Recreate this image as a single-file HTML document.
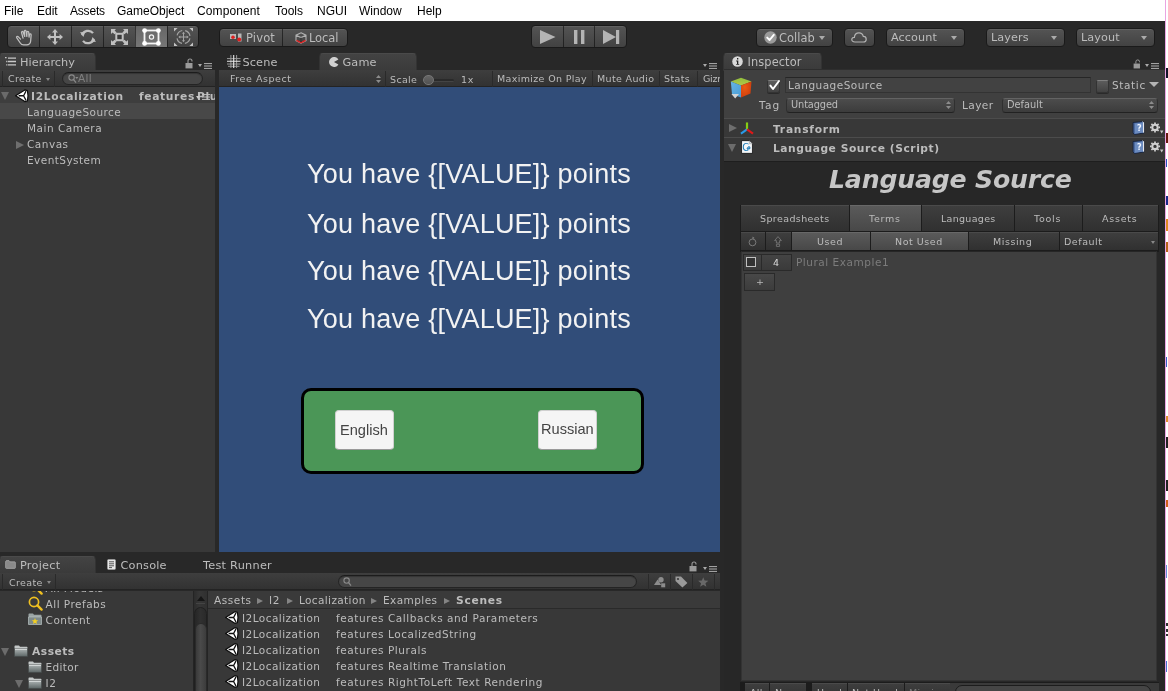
<!DOCTYPE html>
<html>
<head>
<meta charset="utf-8">
<title>Unity - I2 Localization</title>
<style>
html,body{margin:0;padding:0;}
body{width:1168px;height:691px;overflow:hidden;background:#fff;position:relative;font-family:"DejaVu Sans","Liberation Sans",sans-serif;font-size:11px;color:#b4b4b4;}
#app,#app *,#edge,#edge *{position:absolute;box-sizing:border-box;white-space:nowrap;}
#app{will-change:transform;left:0;top:0;width:1165px;height:691px;background:#282828;overflow:hidden;}
#menubar{left:0;top:0;width:1168px;height:21px;background:#fff;color:#000;font-family:"Liberation Sans","DejaVu Sans",sans-serif;font-size:12px;}
#menubar span{top:4px;}
.btn{background:linear-gradient(#545454,#424242);border:1px solid #1a1a1a;border-radius:4px;box-shadow:inset 0 1px 0 rgba(255,255,255,.08);}
.t{color:#bcbcbc;font-size:10.5px;letter-spacing:.45px;line-height:14px;}
.b{font-weight:bold;letter-spacing:.3px;}
.s{font-size:9.5px;letter-spacing:.35px;}
.tab{background:linear-gradient(#434343,#3a3a3a);border:1px solid #333;border-top-color:#4a4a4a;border-bottom:none;border-radius:4px 4px 0 0;}
.tb{background:linear-gradient(#3e3e3e,#323232);border-bottom:1px solid #232323;}
.panel{background:#383838;}
.sep{width:1px;background:rgba(0,0,0,.5);}
.dd{border-left:3px solid transparent;border-right:3px solid transparent;border-top:4px solid #aaa;width:0;height:0;}
svg{overflow:visible}
.bc{border-top:3px solid transparent;border-bottom:3px solid transparent;border-left:6px solid #848484;width:0;height:0;}
.lt{background:linear-gradient(#3e3e3e,#303030);border-top:1px solid #4a4a4a;}
.lt.on{background:linear-gradient(#5a5a5a,#484848);border-top:1px solid #686868;}
</style>
</head>
<body>
<div id="app">
<div id="menubar">
  <span style="left:4px">File</span>
  <span style="left:37px">Edit</span>
  <span style="left:70px;letter-spacing:-.2px">Assets</span>
  <span style="left:117px">GameObject</span>
  <span style="left:197px;letter-spacing:.1px">Component</span>
  <span style="left:275px">Tools</span>
  <span style="left:317px">NGUI</span>
  <span style="left:359px">Window</span>
  <span style="left:417px">Help</span>
</div>

<div id="toolbar" style="left:0;top:21px;width:1165px;height:32px;background:#282828;">
  <!-- transform tools -->
  <div class="btn" style="left:7px;top:4px;width:192px;height:23px;"></div>
  <div style="left:135px;top:5px;width:32px;height:21px;background:linear-gradient(#666,#767676);"></div>
  <div class="sep" style="left:38.5px;top:5px;height:21px"></div>
  <div class="sep" style="left:70.5px;top:5px;height:21px"></div>
  <div class="sep" style="left:102.5px;top:5px;height:21px"></div>
  <div class="sep" style="left:135px;top:5px;height:21px"></div>
  <div class="sep" style="left:166.5px;top:5px;height:21px"></div>
  <!-- hand -->
  <svg style="left:14.5px;top:8px" width="19" height="17" viewBox="0 0 18 16"><path d="M5.2 9.5 L3 7.2 C2.2 6.4 1 7.4 1.7 8.4 L5 13.2 C5.8 14.4 6.8 15 8.2 15 L11 15 C13.2 15 14.6 13.6 14.8 11.6 L15.3 5.6 C15.4 4.5 13.9 4.3 13.7 5.4 L13.3 7.6 L13 3 C12.9 1.8 11.3 1.8 11.3 3 L11.2 7 L10.4 1.9 C10.2 .8 8.7 1 8.8 2.1 L9.2 7 L7.7 2.9 C7.3 1.8 5.9 2.3 6.2 3.4 L7.6 8.6" fill="none" stroke="#c0c0c0" stroke-width="1.2" stroke-linejoin="round" stroke-linecap="round"/></svg>
  <!-- move -->
  <svg style="left:47px;top:8px" width="16" height="16" viewBox="0 0 16 16"><path d="M8 0 L11 3.4 H9 V7 H12.6 V5 L16 8 L12.6 11 V9 H9 V12.6 H11 L8 16 L5 12.6 H7 V9 H3.4 V11 L0 8 L3.4 5 V7 H7 V3.4 H5 Z" fill="#c0c0c0"/></svg>
  <!-- rotate -->
  <svg style="left:80px;top:8px" width="16" height="16" viewBox="0 0 16 16"><path d="M2.2 6.3 A6 5.6 0 0 1 13 4.2" fill="none" stroke="#c0c0c0" stroke-width="2.2"/><path d="M13.8 9.7 A6 5.6 0 0 1 3 11.8" fill="none" stroke="#c0c0c0" stroke-width="2.2"/><path d="M0 3.2 L5.2 3 L3.4 8 Z" fill="#c0c0c0"/><path d="M16 12.8 L10.8 13 L12.6 8 Z" fill="#c0c0c0"/></svg>
  <!-- scale -->
  <svg style="left:111px;top:8px" width="17" height="16" viewBox="0 0 17 16"><rect x="5.3" y="4.8" width="6.4" height="6.4" fill="#3a3a3a" stroke="#c0c0c0" stroke-width="2"/><g fill="#c0c0c0"><path d="M0 0 H5 L3.6 1.4 L5.6 3.4 L3.6 5.2 L1.6 3.4 L0 5 Z"/><path d="M17 0 H12 L13.4 1.4 L11.4 3.4 L13.4 5.2 L15.4 3.4 L17 5 Z"/><path d="M0 16 H5 L3.6 14.6 L5.6 12.6 L3.6 10.8 L1.6 12.6 L0 11 Z"/><path d="M17 16 H12 L13.4 14.6 L11.4 12.6 L13.4 10.8 L15.4 12.6 L17 11 Z"/></g></svg>
  <!-- rect -->
  <svg style="left:142px;top:7px" width="19" height="18" viewBox="0 0 19 18"><rect x="2.5" y="2.5" width="14" height="13" fill="none" stroke="#f4f4f4" stroke-width="1.8"/><g fill="#fff"><circle cx="2.6" cy="2.6" r="2.4"/><circle cx="16.4" cy="2.6" r="2.4"/><circle cx="2.6" cy="15.4" r="2.4"/><circle cx="16.4" cy="15.4" r="2.4"/></g><circle cx="9.5" cy="9" r="2.1" fill="none" stroke="#f4f4f4" stroke-width="1.2"/></svg>
  <!-- transform all -->
  <svg style="left:174px;top:7px" width="19" height="18" viewBox="0 0 19 18"><circle cx="9.5" cy="9" r="6.6" fill="none" stroke="#a4a4a4" stroke-width="1.2" stroke-dasharray="7.4 2.97" stroke-dashoffset="-1.48"/><path d="M9.5 5 V13 M5.5 9 H13.5" stroke="#a4a4a4" stroke-width="1"/><path d="M9.5 3.8 L11 5.8 H8 Z M9.5 14.2 L11 12.2 H8 Z M4.3 9 L6.3 7.5 V10.5 Z M14.7 9 L12.7 7.5 V10.5 Z" fill="#a4a4a4"/><g fill="#c4c4c4"><path d="M0 0 H3.6 L0 3.6 Z" /><path d="M19 0 H15.4 L19 3.6 Z"/><path d="M0 18 H3.6 L0 14.4 Z"/><path d="M19 18 H15.4 L19 14.4 Z"/></g></svg>

  <!-- pivot / local -->
  <div class="btn" style="left:218.5px;top:7px;width:129px;height:19px;"></div>
  <div class="sep" style="left:282px;top:8px;height:17px"></div>
  <svg style="left:230px;top:12px" width="12" height="9" viewBox="0 0 12 9"><rect x="0" y="1" width="6" height="5" fill="#b8b8b8"/><rect x="8" y="0.5" width="3.5" height="8" fill="#b8b8b8"/><circle cx="3" cy="4.2" r="1.8" fill="#e02020"/><circle cx="9.2" cy="6.6" r="2" fill="#e02020"/></svg>
  <span class="t" style="left:246px;top:10px;font-size:11.5px;letter-spacing:.15px">Pivot</span>
  <svg style="left:295px;top:11px" width="12" height="12" viewBox="0 0 12 12"><path d="M6 .8 L11 3.2 V8.6 L6 11.2 L1 8.6 V3.2 Z M1 3.2 L6 5.6 L11 3.2 M6 5.6 V11.2" fill="none" stroke="#b0b0b0" stroke-width="1.1"/><path d="M1.4 8.4 L6 10.6 L10.6 8.4" fill="none" stroke="#d82020" stroke-width="1.6"/><path d="M6 5.8 V10" stroke="#222" stroke-width="1.4"/></svg>
  <span class="t" style="left:309px;top:10px;font-size:11.5px;letter-spacing:-.1px">Local</span>

  <!-- play -->
  <div class="btn" style="left:531px;top:4px;width:96px;height:23px;"></div>
  <div class="sep" style="left:563px;top:5px;height:21px"></div>
  <div class="sep" style="left:594px;top:5px;height:21px"></div>
  <svg style="left:540px;top:9px" width="16" height="14" viewBox="0 0 16 14"><path d="M0 0 L15.5 7 L0 14 Z" fill="#b4b4b4"/></svg>
  <svg style="left:574px;top:9px" width="11" height="14" viewBox="0 0 11 14"><rect x="0" y="0" width="3.4" height="14" fill="#b4b4b4"/><rect x="7" y="0" width="3.4" height="14" fill="#b4b4b4"/></svg>
  <svg style="left:603px;top:9px" width="17" height="14" viewBox="0 0 17 14"><path d="M0 0 L13 7 L0 14 Z" fill="#b4b4b4"/><rect x="13" y="0" width="3.2" height="14" fill="#b4b4b4"/></svg>

  <!-- collab -->
  <div class="btn" style="left:755.5px;top:7px;width:77px;height:19px;"></div>
  <svg style="left:764px;top:10px" width="13" height="13" viewBox="0 0 13 13"><circle cx="6.5" cy="6.5" r="6.2" fill="#9a9a9a"/><path d="M3.2 6.6 L5.6 9 L9.8 3.8" fill="none" stroke="#fff" stroke-width="1.9" stroke-linecap="round" stroke-linejoin="round"/></svg>
  <span class="t" style="left:779px;top:10px;font-size:11.4px;letter-spacing:.05px">Collab</span>
  <div class="dd" style="left:819px;top:15px"></div>
  <!-- cloud -->
  <div class="btn" style="left:843.5px;top:7px;width:31px;height:19px;"></div>
  <svg style="left:851px;top:11px" width="16" height="11" viewBox="0 0 16 11"><path d="M4 10 C1.6 10 .7 8.6 .8 7.4 C.9 6 2.2 5.2 3.4 5.3 C3.6 2.6 5.6 .8 8 .8 C10.2 .8 11.8 2.2 12.3 4.4 C14 4.4 15.2 5.6 15.2 7.2 C15.2 8.8 14 10 12.4 10 Z" fill="none" stroke="#b4b4b4" stroke-width="1.2"/></svg>
  <!-- account -->
  <div class="btn" style="left:885.5px;top:7px;width:79px;height:19px;"></div>
  <span class="t" style="left:891px;top:10px;font-size:11.2px;letter-spacing:.1px">Account</span>
  <div class="dd" style="left:951px;top:15px"></div>
  <div class="btn" style="left:985.5px;top:7px;width:79px;height:19px;"></div>
  <span class="t" style="left:991px;top:10px;font-size:11.2px;letter-spacing:.1px">Layers</span>
  <div class="dd" style="left:1051px;top:15px"></div>
  <div class="btn" style="left:1075.5px;top:7px;width:79px;height:19px;"></div>
  <span class="t" style="left:1081px;top:10px;font-size:11.2px;letter-spacing:.1px">Layout</span>
  <div class="dd" style="left:1141px;top:15px"></div>
</div>

<div id="hier" style="left:0;top:53px;width:215.4px;height:499px;overflow:hidden">
  <div class="tab" style="left:-1px;top:0;width:97px;height:18px;"></div>
  <svg style="left:5px;top:4px" width="11" height="9" viewBox="0 0 11 9"><path d="M0 .7 H1.6 M3 1.2 H11 M3 4.5 H11 M3 7.8 H11 M1.2 4.5 H2.4 M1.2 7.8 H2.4" stroke="#c8c8c8" stroke-width="1.3"/></svg>
  <span class="t" style="left:20px;top:2.5px;font-size:11.3px;letter-spacing:.05px">Hierarchy</span>
  <!-- lock + menu -->
  <svg style="left:185px;top:5px" width="9" height="11" viewBox="0 0 9 11"><rect x=".5" y="5" width="7" height="5.4" fill="#9a9a9a"/><path d="M3 5 V3 A2 2 0 0 1 7 3 V3.6" fill="none" stroke="#9a9a9a" stroke-width="1.1"/></svg>
  <div class="dd" style="left:198px;top:11px;border-left-width:2.5px;border-right-width:2.5px;border-top-width:3px"></div>
  <svg style="left:204px;top:10px" width="8" height="6" viewBox="0 0 8 6"><path d="M0 .6 H8 M0 3 H8 M0 5.4 H8" stroke="#b0b0b0" stroke-width="1"/></svg>
  <!-- toolbar -->
  <div class="tb" style="left:0;top:16.6px;width:216px;height:17.6px;"></div>
  <div style="left:2px;top:18px;width:1px;height:16px;background:#2a2a2a"></div>
  <span class="t s" style="left:8px;top:19px;">Create</span>
  <div class="dd" style="left:46px;top:25px;border-left-width:2.5px;border-right-width:2.5px;border-top-width:3px;border-top-color:#888"></div>
  <div style="left:54px;top:18px;width:1px;height:16px;background:#2a2a2a"></div>
  <div style="left:62px;top:19px;width:141px;height:13px;border-radius:7px;background:#464646;border:1px solid #242424;border-top-color:#1c1c1c;box-shadow:inset 0 1px 1px rgba(0,0,0,.25)"></div>
  <svg style="left:68px;top:21px" width="12" height="10" viewBox="0 0 12 10"><circle cx="3.6" cy="3.6" r="2.7" fill="none" stroke="#8a8a8a" stroke-width="1.1"/><path d="M5.6 5.6 L8 8.6" stroke="#8a8a8a" stroke-width="1.3"/><path d="M7.2 3 H10.4 L8.8 5 Z" fill="#8a8a8a"/></svg>
  <span class="t s" style="left:78px;top:18px;color:#808080;font-size:10.5px">All</span>
  <!-- list -->
  <div class="panel" style="left:0;top:34px;width:216px;height:465px;"></div>
  <div style="left:0;top:34px;width:216px;height:16px;background:#3e3e3e"></div>
  <div style="left:0;top:50px;width:216px;height:16px;background:#484848"></div>
  <div style="left:1px;top:39px;border-left:4.5px solid transparent;border-right:4.5px solid transparent;border-top:8px solid #6a6a6a;width:0;height:0"></div>
  <!-- unity logo -->
  <svg style="left:14.5px;top:35.5px" width="13.5" height="13.5" viewBox="0 0 13.5 13"><path d="M.6 6.5 L9.8 .7 L12.4 1.3 L13 6.5 L12.4 11.7 L9.8 12.3 Z" fill="#fff" stroke="#0c0c0c" stroke-width="1.2" stroke-linejoin="round"/><path d="M3.6 6.5 H8.6 M8.6 6.5 L11 1.9 M8.6 6.5 L11 11.1" stroke="#111" stroke-width="1.3" fill="none"/></svg>
  <span class="t b" style="left:31px;top:37px;font-size:10.7px;letter-spacing:0.65px">I2Localization</span>
  <span class="t b" style="left:139px;top:37px;font-size:10.7px;letter-spacing:0.65px;">features</span>
  <span class="t b" style="left:197px;top:37px;font-size:10.7px;letter-spacing:0.65px;">Plurals</span>
  <svg style="left:202px;top:41px" width="8" height="6" viewBox="0 0 8 6"><path d="M0 .6 H8 M0 3 H8 M0 5.4 H8" stroke="#c0c0c0" stroke-width="1"/></svg>
  <div class="dd" style="left:196px;top:43px;border-left-width:2.5px;border-right-width:2.5px;border-top-width:3px;border-top-color:#ccc"></div>
  <span class="t" style="left:27px;top:52px;">LanguageSource</span>
  <span class="t" style="left:27px;top:68px;letter-spacing:0.50px">Main Camera</span>
  <div style="left:16px;top:88px;border-top:4.5px solid transparent;border-bottom:4.5px solid transparent;border-left:8px solid #6e6e6e;width:0;height:0"></div>
  <span class="t" style="left:27px;top:84px;letter-spacing:0.50px">Canvas</span>
  <span class="t" style="left:27px;top:100px;">EventSystem</span>
</div>

<div id="game" style="left:219px;top:53px;width:501px;height:500px;overflow:hidden">
  <!-- scene tab (inactive) -->
  <svg style="left:8px;top:2px" width="13.5" height="13" viewBox="0 0 13.5 13"><path d="M3.9 0 V13 M9.6 0 V13 M0 3.6 H13.5 M0 9 H13.5 M1 11.3 H12.5" stroke="#9a9a9a" stroke-width="1"/><path d="M6.7 0 V13 M0 6.3 H13.5" stroke="#e8e8e8" stroke-width="1.1"/></svg>
  <span class="t" style="left:23.5px;top:3px;font-size:11.3px;letter-spacing:.1px">Scene</span>
  <!-- game tab -->
  <div class="tab" style="left:100px;top:0;width:98px;height:18px;"></div>
  <svg style="left:110px;top:4px" width="10" height="10" viewBox="0 0 10 10"><path d="M5 5 L9.4 2.6 A5 5 0 1 0 9.4 7.4 Z" fill="#d0d0d0"/></svg>
  <span class="t" style="left:123.5px;top:3px;font-size:11.3px;letter-spacing:.1px">Game</span>
  <div class="dd" style="left:484px;top:11px;border-left-width:2.5px;border-right-width:2.5px;border-top-width:3px"></div>
  <svg style="left:490px;top:10px" width="8" height="6" viewBox="0 0 8 6"><path d="M0 .6 H8 M0 3 H8 M0 5.4 H8" stroke="#b0b0b0" stroke-width="1"/></svg>
  <!-- toolbar -->
  <div class="tb" style="left:0;top:16.6px;width:502px;height:17.6px;"></div>
  <span class="t s" style="left:11px;top:19px;letter-spacing:.55px">Free Aspect</span>
  <svg style="left:157px;top:22px" width="5" height="8" viewBox="0 0 5 8"><path d="M2.5 0 L5 3 H0 Z M2.5 8 L5 5 H0 Z" fill="#8c8c8c"/></svg>
  <div style="left:165.5px;top:18px;width:1px;height:16px;background:#2a2a2a"></div>
  <span class="t s" style="left:171px;top:20px;">Scale</span>
  <div style="left:208px;top:25.5px;width:27px;height:3px;background:#2a2a2a;border-radius:1.5px;border-bottom:1px solid #444"></div>
  <div style="left:204px;top:21.5px;width:10.5px;height:10.5px;border-radius:6px;background:linear-gradient(#666,#525252);border:1px solid #767676"></div>
  <span class="t s" style="left:242px;top:20px;letter-spacing:.8px">1x</span>
  <div style="left:273px;top:18px;width:1px;height:16px;background:#2a2a2a"></div>
  <span class="t s" style="left:278px;top:19px;">Maximize On Play</span>
  <div style="left:373px;top:18px;width:1px;height:16px;background:#2a2a2a"></div>
  <span class="t s" style="left:378px;top:19px;">Mute Audio</span>
  <div style="left:440px;top:18px;width:1px;height:16px;background:#2a2a2a"></div>
  <span class="t s" style="left:445px;top:19px;">Stats</span>
  <div style="left:478px;top:18px;width:1px;height:16px;background:#2a2a2a"></div>
  <span class="t s" style="left:484px;top:19px;width:17px;overflow:hidden;letter-spacing:-.25px">Gizmos</span>
  <!-- view -->
  <div id="view" style="left:0;top:34px;width:502px;height:465px;background:#314d79;overflow:hidden;font-family:'Liberation Sans','DejaVu Sans',sans-serif;">
    <span style="left:88px;top:72px;font-size:27px;line-height:31px;letter-spacing:.23px;color:#f2f2f2">You have {[VALUE]} points</span>
    <span style="left:88px;top:122px;font-size:27px;line-height:31px;letter-spacing:.23px;color:#f2f2f2">You have {[VALUE]} points</span>
    <span style="left:88px;top:169px;font-size:27px;line-height:31px;letter-spacing:.23px;color:#f2f2f2">You have {[VALUE]} points</span>
    <span style="left:88px;top:217px;font-size:27px;line-height:31px;letter-spacing:.23px;color:#f2f2f2">You have {[VALUE]} points</span>
    <div style="left:82px;top:301px;width:343px;height:86px;background:#4b9657;border:3px solid #000;border-radius:10px"></div>
    <div style="left:116px;top:323px;width:59px;height:40px;background:#f5f5f5;border:1px solid #d0d0d0;border-bottom-color:#9a9a9a;border-radius:4px"></div>
    <span style="left:121px;top:333px;font-size:14.6px;line-height:18px;margin-top:.5px;color:#444">English</span>
    <div style="left:319px;top:323px;width:59px;height:40px;background:#f5f5f5;border:1px solid #d0d0d0;border-bottom-color:#9a9a9a;border-radius:4px"></div>
    <span style="left:322px;top:332px;font-size:14.6px;line-height:18px;margin-top:.5px;color:#444">Russian</span>
  </div>
</div>

<div id="insp" style="left:724px;top:53px;width:441px;height:638px;">
  <div class="tab" style="left:-1px;top:0;width:99px;height:18px;"></div>
  <svg style="left:8px;top:3px" width="11" height="11" viewBox="0 0 11 11"><circle cx="5.5" cy="5.5" r="5.3" fill="#d8d8d8"/><path d="M4.2 4.6 H6.3 V8 H7.2 V8.8 H4.2 V8 H5 V5.4 H4.2 Z M5 2 H6.3 V3.5 H5 Z" fill="#222"/></svg>
  <span class="t" style="left:23.5px;top:2.3px;font-size:11.4px;letter-spacing:.1px">Inspector</span>
  <svg style="left:408.5px;top:6px" width="8.5" height="10" viewBox="0 0 9 11"><rect x=".5" y="5" width="7" height="5.4" fill="#9a9a9a"/><path d="M3 5 V3 A2 2 0 0 1 7 3 V3.6" fill="none" stroke="#9a9a9a" stroke-width="1.1"/></svg>
  <div class="dd" style="left:421px;top:11px;border-left-width:2.5px;border-right-width:2.5px;border-top-width:3px"></div>
  <svg style="left:427px;top:10px" width="8" height="6" viewBox="0 0 8 6"><path d="M0 .6 H8 M0 3 H8 M0 5.4 H8" stroke="#b0b0b0" stroke-width="1"/></svg>
  <div class="panel" style="left:0;top:16.4px;width:441px;height:622px;border-top:1px solid #2e2e2e;"></div>

  <!-- header: object -->
  <div style="left:0;top:17.4px;width:441px;height:48px;background:#404040"></div>
  <svg style="left:6px;top:24px" width="23" height="22" viewBox="0 0 23 22"><defs><linearGradient id="cg1" x1="0" y1="0" x2="0" y2="1"><stop offset="0" stop-color="#8fbe3c"/><stop offset="1" stop-color="#b4c84a"/></linearGradient><linearGradient id="cg2" x1="0" y1="0" x2="1" y2="1"><stop offset="0" stop-color="#66b4e4"/><stop offset="1" stop-color="#4a9cd4"/></linearGradient><radialGradient id="cg3" cx=".35" cy=".35" r=".8"><stop offset="0" stop-color="#ec5c14"/><stop offset="1" stop-color="#c8380c"/></radialGradient></defs><path d="M11 .7 L21.5 4.5 L11 8.4 L.8 4.5 Z" fill="url(#cg1)"/><path d="M.8 4.5 L11 8.4 V20.5 L2 17.3 Z" fill="url(#cg2)"/><path d="M11 8.4 L21.5 4.5 L20.5 16.6 L11 20.5 Z" fill="url(#cg3)"/><path d="M1.4 17 H9 L5.2 21.4 Z" fill="#d4d4d4"/></svg>
  <div style="left:43px;top:27px;width:13px;height:12.5px;border-radius:2.5px;background:linear-gradient(#5c5c5c,#424242);border:1px solid #333;border-top-color:#808080;box-shadow:0 1px 0 #2a2a2a"></div>
  <svg style="left:44px;top:26px" width="13" height="13" viewBox="0 0 13 13"><path d="M2.4 6.6 L5 10 L11 2" fill="none" stroke="#fff" stroke-width="2" stroke-linecap="round" stroke-linejoin="round"/></svg>
  <div style="left:61px;top:24px;width:306px;height:16px;background:#424242;border:1px solid #343434;border-top:1.5px solid #262626;border-bottom-color:#333"></div>
  <span class="t" style="left:64px;top:25px;letter-spacing:0.48px">LanguageSource</span>
  <div style="left:372px;top:27px;width:12.5px;height:12.5px;border-radius:2.5px;background:linear-gradient(#5c5c5c,#424242);border:1px solid #333;border-top-color:#808080;box-shadow:0 1px 0 #2a2a2a"></div>
  <span class="t" style="left:388px;top:25px;letter-spacing:0.63px">Static</span>
  <div class="dd" style="left:425px;top:29px;border-left-width:5px;border-right-width:5px;border-top-width:5.5px;border-top-color:#b4b4b4"></div>

  <span class="t" style="left:35px;top:45px;font-size:10.6px;letter-spacing:1.2px">Tag</span>
  <div class="btn" style="left:62px;top:44.5px;width:169px;height:15px;border-radius:3.5px;background:linear-gradient(#4c4c4c,#3c3c3c);border-color:#636363 #303030 #222 #303030;box-shadow:none"></div>
  <span class="t s" style="left:67px;top:45px;font-size:9.8px;letter-spacing:-.12px">Untagged</span>
  <svg style="left:222px;top:48px" width="5" height="8" viewBox="0 0 5 8"><path d="M2.5 0 L5 3 H0 Z M2.5 8 L5 5 H0 Z" fill="#8c8c8c"/></svg>
  <span class="t" style="left:238px;top:45px;font-size:10.6px;letter-spacing:.4px">Layer</span>
  <div class="btn" style="left:278px;top:44.5px;width:156px;height:15px;border-radius:3.5px;background:linear-gradient(#4c4c4c,#3c3c3c);border-color:#636363 #303030 #222 #303030;box-shadow:none"></div>
  <span class="t s" style="left:283px;top:45px;font-size:9.8px;letter-spacing:.02px">Default</span>
  <svg style="left:425px;top:48px" width="5" height="8" viewBox="0 0 5 8"><path d="M2.5 0 L5 3 H0 Z M2.5 8 L5 5 H0 Z" fill="#8c8c8c"/></svg>

  <!-- component headers -->
  <div style="left:0;top:65px;width:441px;height:1px;background:#4c4c4c"></div>
  <div style="left:0;top:84px;width:441px;height:1px;background:#4c4c4c"></div>
  <div style="left:5px;top:71px;border-top:4.5px solid transparent;border-bottom:4.5px solid transparent;border-left:8px solid #6e6e6e;width:0;height:0"></div>
  <svg style="left:16px;top:68.6px" width="14" height="13" viewBox="0 0 15 14"><path d="M7.5 8 V0.5" stroke="#86cc14" stroke-width="2.4"/><path d="M7.5 8 L1 12.5" stroke="#2a9ae8" stroke-width="2.3"/><path d="M7.5 8 L14 12.5" stroke="#e01818" stroke-width="2.3"/></svg>
  <span class="t b" style="left:49px;top:69.5px;font-size:10.7px;letter-spacing:0.75px">Transform</span>
  <div style="left:3.9px;top:91px;border-left:4.8px solid transparent;border-right:4.8px solid transparent;border-top:8.5px solid #6c6c6c;width:0;height:0"></div>
  <svg style="left:17px;top:87px" width="12" height="14" viewBox="0 0 13 15"><path d="M.6 .6 H9 L12.4 4 V14.4 H.6 Z" fill="#f4f6f8" stroke="#141414" stroke-width=".9"/><path d="M9 .6 V4 H12.4" fill="#d8dce0" stroke="#888" stroke-width=".5"/><text x="1.4" y="12" font-family="DejaVu Sans, sans-serif" font-size="10.5" fill="#1878b4">C</text><text x="5.8" y="10.6" font-family="DejaVu Sans, sans-serif" font-weight="bold" font-size="6.2" fill="#1878b4">#</text></svg>
  <span class="t b" style="left:49px;top:88.5px;font-size:10.7px;letter-spacing:0.55px">Language Source (Script)</span>
  <!-- help + gear icons -->
  <svg style="left:408px;top:68px" width="13" height="14" viewBox="0 0 13 14" id="bk"><path d="M1 1.5 L10.5 .5 L12 1.5 V12 L2.5 13.5 L1 12 Z" fill="#46649a" stroke="#16223c" stroke-width=".9"/><path d="M2.8 2.4 L11.6 1.6 V11.6 L2.8 12.8 Z" fill="#6c8cc0"/><path d="M10.5 .8 L11.6 1.6 V11.6" stroke="#f4f4f4" stroke-width="1" fill="none"/><text x="5" y="10.4" font-family="DejaVu Sans, sans-serif" font-weight="bold" font-size="8" fill="#eef4ff">?</text></svg>
  <svg style="left:408px;top:87px" width="13" height="14" viewBox="0 0 13 14"><path d="M1 1.5 L10.5 .5 L12 1.5 V12 L2.5 13.5 L1 12 Z" fill="#46649a" stroke="#16223c" stroke-width=".9"/><path d="M2.8 2.4 L11.6 1.6 V11.6 L2.8 12.8 Z" fill="#6c8cc0"/><path d="M10.5 .8 L11.6 1.6 V11.6" stroke="#f4f4f4" stroke-width="1" fill="none"/><text x="5" y="10.4" font-family="DejaVu Sans, sans-serif" font-weight="bold" font-size="8" fill="#eef4ff">?</text></svg>
  <svg style="left:426px;top:69px" width="14" height="12" viewBox="0 0 14 12"><circle cx="5" cy="5.4" r="2.7" fill="none" stroke="#d0d0d0" stroke-width="2"/><path d="M5 .4 V2 M5 8.8 V10.4 M0 5.4 H1.6 M8.4 5.4 H10 M1.4 1.8 L2.6 3 M7.4 7.8 L8.6 9 M1.4 9 L2.6 7.8 M7.4 3 L8.6 1.8" stroke="#d0d0d0" stroke-width="1.7"/><path d="M10 8.4 H13.4 L11.7 11.4 Z" fill="#c8c8c8"/></svg>
  <svg style="left:426px;top:88px" width="14" height="12" viewBox="0 0 14 12"><circle cx="5" cy="5.4" r="2.7" fill="none" stroke="#d0d0d0" stroke-width="2"/><path d="M5 .4 V2 M5 8.8 V10.4 M0 5.4 H1.6 M8.4 5.4 H10 M1.4 1.8 L2.6 3 M7.4 7.8 L8.6 9 M1.4 9 L2.6 7.8 M7.4 3 L8.6 1.8" stroke="#d0d0d0" stroke-width="1.7"/><path d="M10 8.4 H13.4 L11.7 11.4 Z" fill="#c8c8c8"/></svg>

  <!-- script body (dark) -->
  <div style="left:0;top:108px;width:441px;height:530px;background:#272727;border-top:1px solid #1e1e1e"></div>
  <span style="left:105px;top:111px;font-size:25.2px;line-height:32px;font-weight:bold;font-style:italic;color:#c6c6c6;letter-spacing:-.2px">Language Source</span>

  <!-- tabs -->
  <div id="ltabs" style="left:16px;top:152px;width:419px;height:27px;background:#1c1c1c"></div>
  <div class="lt" style="left:17px;top:152px;width:108px;height:26px"></div>
  <div class="lt on" style="left:126px;top:152px;width:71px;height:26px"></div>
  <div class="lt" style="left:198px;top:152px;width:92px;height:26px"></div>
  <div class="lt" style="left:291px;top:152px;width:67px;height:26px"></div>
  <div class="lt" style="left:359px;top:152px;width:75px;height:26px"></div>
  <span class="t s" style="left:36px;top:159px;letter-spacing:.4px">Spreadsheets</span>
  <span class="t s" style="left:145px;top:159px;letter-spacing:.75px">Terms</span>
  <span class="t s" style="left:217px;top:159px;letter-spacing:.3px">Languages</span>
  <span class="t s" style="left:310px;top:159px;letter-spacing:.75px">Tools</span>
  <span class="t s" style="left:378px;top:159px;letter-spacing:.75px">Assets</span>

  <!-- filter row -->
  <div style="left:16px;top:178px;width:419px;height:21px;background:#1c1c1c"></div>
  <div class="lt" style="left:17px;top:179px;width:24px;height:18px"></div>
  <div class="lt" style="left:42px;top:179px;width:25px;height:18px"></div>
  <div class="lt on" style="left:68px;top:179px;width:78px;height:18px"></div>
  <div class="lt on" style="left:147px;top:179px;width:97px;height:18px"></div>
  <div class="lt" style="left:245px;top:179px;width:90px;height:18px"></div>
  <div class="lt" style="left:336px;top:179px;width:98px;height:18px"></div>
  <svg style="left:24px;top:183px" width="9" height="11" viewBox="0 0 9 11"><circle cx="4.5" cy="6.4" r="3.4" fill="none" stroke="#808080" stroke-width=".9"/><path d="M4.5 .4 L6.6 2 L4.5 3.2 Z" fill="#808080"/></svg>
  <svg style="left:50px;top:183px" width="8" height="11" viewBox="0 0 8 11"><path d="M4 .6 L7.4 4.6 H5.6 V7 H2.4 V4.6 H.6 Z M2.4 8.2 H5.6 V10.4 H2.4 Z" fill="none" stroke="#7c7c7c" stroke-width=".8"/></svg>
  <span class="t s" style="left:93px;top:182px;letter-spacing:.55px">Used</span>
  <span class="t s" style="left:171px;top:182px;letter-spacing:.55px">Not Used</span>
  <span class="t s" style="left:269px;top:182px;letter-spacing:.55px">Missing</span>
  <span class="t s" style="left:340px;top:182px;letter-spacing:.55px">Default</span>
  <div class="dd" style="left:427px;top:188px;border-left-width:2.5px;border-right-width:2.5px;border-top-width:3px;border-top-color:#888"></div>

  <!-- list -->
  <div style="left:17px;top:198px;width:416px;height:430px;background:#3f3f3f;border:1px solid #333;border-top:1px solid #262626"></div>
  <div style="left:19px;top:201px;width:19px;height:17px;background:linear-gradient(#444,#3a3a3a);border:1px solid #2a2a2a"></div>
  <div style="left:37px;top:201px;width:31px;height:17px;background:linear-gradient(#444,#3a3a3a);border:1px solid #2a2a2a"></div>
  <div style="left:22px;top:204px;width:10px;height:10px;border:1px solid #c0c0c0;background:#333"></div>
  <span class="t s" style="left:49px;top:203px;color:#dcdcdc">4</span>
  <span class="t" style="left:72px;top:202px;color:#7c7c7c;letter-spacing:0.53px">Plural Example1</span>
  <div style="left:20px;top:220px;width:31px;height:18px;background:linear-gradient(#484848,#3c3c3c);border:1px solid #2a2a2a"></div>
  <span class="t s" style="left:32px;top:222px;color:#b8b8b8">+</span>

  <!-- bottom row (clipped) -->
  <div style="left:16px;top:629px;width:419px;height:9px;background:#1c1c1c"></div>
  <div class="lt" style="left:21px;top:630px;width:24px;height:17px"></div>
  <div class="lt" style="left:46px;top:630px;width:36px;height:17px"></div>
  <div class="lt" style="left:88px;top:630px;width:35px;height:17px"></div>
  <div class="lt" style="left:124px;top:630px;width:56px;height:17px"></div>
  <div class="lt" style="left:181px;top:630px;width:45px;height:17px"></div>
  <div style="left:226px;top:630px;width:209px;height:17px;background:#3a3a3a"></div>
  <div style="left:231px;top:632px;width:196px;height:14px;border-radius:7px;background:#454545;border:1px solid #1c1c1c"></div>
  <span class="t s" style="left:26px;top:633px;">All</span>
  <span class="t s" style="left:51px;top:633px;">None</span>
  <span class="t s" style="left:93px;top:633px;">Used</span>
  <span class="t s" style="left:128px;top:633px;">Not Used</span>
  <span class="t s" style="left:185px;top:633px;color:#7a7a7a">Missing</span>
</div>

<div id="proj" style="left:0;top:556px;width:720px;height:135px;overflow:hidden">
  <svg width="0" height="0" style="left:0;top:0"><defs><linearGradient id="fg" x1="0" y1="0" x2="0" y2="1"><stop offset="0" stop-color="#b0b6b6"/><stop offset="1" stop-color="#5c6666"/></linearGradient></defs></svg>
  <div class="tab" style="left:-1px;top:0;width:97px;height:18px;"></div>
  <svg style="left:5px;top:4px" width="11" height="9" viewBox="0 0 11 9"><path d="M.6 2 C.6 1 1 .6 2 .6 H4 L5 1.8 H9.6 C10.2 1.8 10.4 2.2 10.4 2.8 V7.6 C10.4 8.2 10 8.4 9.6 8.4 H1.4 C.8 8.4 .6 8 .6 7.6 Z" fill="#8a8a8a" stroke="#b8b8b8" stroke-width=".6"/></svg>
  <span class="t" style="left:20px;top:3px;font-size:11.3px;letter-spacing:.25px">Project</span>
  <svg style="left:107px;top:3px" width="9" height="11" viewBox="0 0 9 11"><rect x=".5" y=".5" width="8" height="10" rx="1" fill="#e8e8e8" stroke="#aaa" stroke-width=".5"/><path d="M2 2.8 H7 M2 4.8 H7 M2 6.8 H7 M2 8.6 H5" stroke="#444" stroke-width=".9"/></svg>
  <span class="t" style="left:120.5px;top:3px;font-size:11.3px;letter-spacing:.2px">Console</span>
  <span class="t" style="left:203px;top:3px;font-size:11.3px;letter-spacing:.25px">Test Runner</span>
  <svg style="left:689px;top:5px" width="9" height="11" viewBox="0 0 9 11"><rect x=".5" y="5" width="7" height="5.4" fill="#9a9a9a"/><path d="M3 5 V3 A2 2 0 0 1 7 3 V3.6" fill="none" stroke="#9a9a9a" stroke-width="1.1"/></svg>
  <div class="dd" style="left:703px;top:11px;border-left-width:2.5px;border-right-width:2.5px;border-top-width:3px"></div>
  <svg style="left:709px;top:10px" width="8" height="6" viewBox="0 0 8 6"><path d="M0 .6 H8 M0 3 H8 M0 5.4 H8" stroke="#b0b0b0" stroke-width="1"/></svg>
  <!-- toolbar -->
  <div class="tb" style="left:0;top:16.6px;width:721px;height:17.9px;"></div>
  <div style="left:2px;top:18px;width:1px;height:16px;background:#2a2a2a"></div>
  <span class="t s" style="left:9px;top:20px;">Create</span>
  <div class="dd" style="left:47px;top:25px;border-left-width:2.5px;border-right-width:2.5px;border-top-width:3px;border-top-color:#888"></div>
  <div style="left:55px;top:18px;width:1px;height:16px;background:#2a2a2a"></div>
  <div style="left:338px;top:19px;width:299px;height:13px;border-radius:7px;background:#464646;border:1px solid #242424;border-top-color:#1c1c1c;box-shadow:inset 0 1px 1px rgba(0,0,0,.25)"></div>
  <svg style="left:343px;top:21px" width="10" height="10" viewBox="0 0 10 10"><circle cx="3.6" cy="3.6" r="2.7" fill="none" stroke="#8a8a8a" stroke-width="1.1"/><path d="M5.6 5.6 L8 8.6" stroke="#8a8a8a" stroke-width="1.3"/></svg>
  <div style="left:648px;top:18px;width:1px;height:16px;background:#2a2a2a"></div>
  <svg style="left:654px;top:21px" width="11.5" height="10.5" viewBox="0 0 11.5 10.5"><circle cx="7" cy="2.8" r="2.7" fill="#8c8c8c"/><path d="M0 8 L3.6 2.4 L7.2 8 Z" fill="#8c8c8c"/><rect x="7.2" y="6.3" width="4" height="4" fill="#8c8c8c"/></svg>
  <div style="left:670px;top:18px;width:1px;height:16px;background:#2a2a2a"></div>
  <svg style="left:675px;top:20px" width="13" height="12" viewBox="0 0 13 12"><path d="M.5 .5 H6 L12.4 7 L7.4 11.6 L.5 5 Z" fill="#9a9a9a"/><circle cx="3" cy="3" r="1.1" fill="#3a3a3a"/></svg>
  <div style="left:692px;top:18px;width:1px;height:16px;background:#2a2a2a"></div>
  <svg style="left:697.5px;top:21px" width="10.5" height="10" viewBox="0 0 13 12"><path d="M6.5 0 L8.2 4.2 L12.8 4.5 L9.2 7.4 L10.4 11.8 L6.5 9.3 L2.6 11.8 L3.8 7.4 L.2 4.5 L4.8 4.2 Z" fill="#686868"/></svg>
  <div style="left:714px;top:18px;width:1px;height:16px;background:#2a2a2a"></div>

  <!-- content -->
  <div class="panel" style="left:0;top:35px;width:721px;height:100px;border-right:1px solid #1e1e1e"></div>
  <div id="ltree" style="left:0;top:35px;width:193px;height:100px;overflow:hidden">
    <svg style="left:28px;top:-11px" width="15" height="15" viewBox="0 0 15 15"><circle cx="6" cy="6" r="4.6" fill="none" stroke="#f0c020" stroke-width="1.7"/><path d="M9.4 9.4 L13.6 13.6" stroke="#f0c020" stroke-width="2.4" stroke-linecap="round"/></svg>
    <span class="t" style="left:45.6px;top:-10px;letter-spacing:0.48px">All Models</span>
    <svg style="left:28px;top:5px" width="15" height="15" viewBox="0 0 15 15"><circle cx="6" cy="6" r="4.6" fill="none" stroke="#f0c020" stroke-width="1.7"/><path d="M9.4 9.4 L13.6 13.6" stroke="#f0c020" stroke-width="2.4" stroke-linecap="round"/></svg>
    <span class="t" style="left:45.6px;top:6px;letter-spacing:0.48px">All Prefabs</span>
    <svg style="left:28px;top:22px" width="14" height="12" viewBox="0 0 14 12"><path d="M.5 1.5 C.5 .9 .9 .5 1.5 .5 H5 L6 1.8 H12.5 C13.1 1.8 13.5 2.2 13.5 2.8 V11.5 H.5 Z" fill="#9aa4a4"/><path d="M.5 4 H13.5 V11.5 H.5 Z" fill="#7f8a8a" stroke="#c8d0d0" stroke-width=".5"/><path d="M7 5 L7.9 7.2 L10.2 7.3 L8.4 8.7 L9 11 L7 9.7 L5 11 L5.6 8.7 L3.8 7.3 L6.1 7.2 Z" fill="#f4d020"/></svg>
    <span class="t" style="left:45.6px;top:22px;letter-spacing:0.48px">Content</span>
    <div style="left:1.3px;top:56.5px;border-left:4.2px solid transparent;border-right:4.2px solid transparent;border-top:8px solid #6c6c6c;width:0;height:0"></div>
    <svg class="fold" style="left:14px;top:53.5px" width="14" height="12" viewBox="0 0 14 12"><path d="M.5 1.5 C.5 .9 .9 .5 1.5 .5 H5 L6 1.8 H12.5 C13.1 1.8 13.5 2.2 13.5 2.8 V11.5 H.5 Z" fill="#c4c8c8"/><path d="M.5 3.6 H13.5 V11.5 H.5 Z" fill="url(#fg)" stroke="#2c3030" stroke-width=".6"/><path d="M1 4.2 H13" stroke="#f0f2f2" stroke-width=".9"/></svg>
    <span class="t b" style="left:32px;top:54px;font-size:10.7px;letter-spacing:0.50px">Assets</span>
    <svg class="fold" style="left:28px;top:69.5px" width="14" height="12" viewBox="0 0 14 12"><path d="M.5 1.5 C.5 .9 .9 .5 1.5 .5 H5 L6 1.8 H12.5 C13.1 1.8 13.5 2.2 13.5 2.8 V11.5 H.5 Z" fill="#c4c8c8"/><path d="M.5 3.6 H13.5 V11.5 H.5 Z" fill="url(#fg)" stroke="#2c3030" stroke-width=".6"/><path d="M1 4.2 H13" stroke="#f0f2f2" stroke-width=".9"/></svg>
    <span class="t" style="left:45.6px;top:69px;letter-spacing:0.33px">Editor</span>
    <div style="left:15.3px;top:88.5px;border-left:4.2px solid transparent;border-right:4.2px solid transparent;border-top:8px solid #6c6c6c;width:0;height:0"></div>
    <svg class="fold" style="left:28px;top:85.5px" width="14" height="12" viewBox="0 0 14 12"><path d="M.5 1.5 C.5 .9 .9 .5 1.5 .5 H5 L6 1.8 H12.5 C13.1 1.8 13.5 2.2 13.5 2.8 V11.5 H.5 Z" fill="#c4c8c8"/><path d="M.5 3.6 H13.5 V11.5 H.5 Z" fill="url(#fg)" stroke="#2c3030" stroke-width=".6"/><path d="M1 4.2 H13" stroke="#f0f2f2" stroke-width=".9"/></svg>
    <span class="t" style="left:45.6px;top:85px;letter-spacing:0.48px">I2</span>
  </div>
  <!-- scrollbar -->
  <div style="left:193px;top:35px;width:15px;height:100px;background:linear-gradient(90deg,#2c2c2c,#363636 40%,#303030);border-left:1px solid #242424;border-right:1px solid #242424"></div>
  <div style="left:196.5px;top:40px;border-left:4px solid transparent;border-right:4px solid transparent;border-bottom:5.5px solid #161616;width:0;height:0"></div>
  <div style="left:196px;top:47px;width:9px;height:1px;background:#444"></div>
  <div style="left:194px;top:50.5px;width:13px;height:100px;border-radius:6.5px;background:linear-gradient(90deg,#262626,#303030 50%,#2a2a2a);border:1px solid #202020"></div>
  <div style="left:194.5px;top:66.5px;width:12px;height:100px;border-radius:6px;background:linear-gradient(90deg,#3a3a3a,#4a4a4a 45%,#3c3c3c);border:1px solid #2a2a2a"></div>
  <!-- right pane -->
  <div style="left:208px;top:35px;width:512px;height:18px;background:#3a3a3a;border-bottom:1px solid #2a2a2a"></div>
  <span class="t" style="left:214px;top:37px;letter-spacing:0.58px">Assets</span>
  <span class="t" style="left:269px;top:37px;letter-spacing:0.58px">I2</span>
  <span class="t" style="left:299px;top:37px;letter-spacing:0.38px">Localization</span>
  <span class="t" style="left:383px;top:37px;letter-spacing:0.43px">Examples</span>
  <span class="t b" style="left:456px;top:38px;font-size:10.7px;letter-spacing:0.70px">Scenes</span>
  <div class="bc" style="left:257px;top:41.5px"></div>
  <div class="bc" style="left:287px;top:41.5px"></div>
  <div class="bc" style="left:371px;top:41.5px"></div>
  <div class="bc" style="left:444px;top:41.5px"></div>
  <!-- rows -->
  <svg class="ul" style="left:225px;top:54.5px" width="13.5" height="13" viewBox="0 0 13.5 13"><path d="M.6 6.5 L9.8 .7 L12.4 1.3 L13 6.5 L12.4 11.7 L9.8 12.3 Z" fill="#fff" stroke="#0c0c0c" stroke-width="1.2" stroke-linejoin="round"/><path d="M3.6 6.5 H8.6 M8.6 6.5 L11 1.9 M8.6 6.5 L11 11.1" stroke="#111" stroke-width="1.3" fill="none"/></svg>
  <svg class="ul" style="left:225px;top:70.5px" width="13.5" height="13" viewBox="0 0 13.5 13"><path d="M.6 6.5 L9.8 .7 L12.4 1.3 L13 6.5 L12.4 11.7 L9.8 12.3 Z" fill="#fff" stroke="#0c0c0c" stroke-width="1.2" stroke-linejoin="round"/><path d="M3.6 6.5 H8.6 M8.6 6.5 L11 1.9 M8.6 6.5 L11 11.1" stroke="#111" stroke-width="1.3" fill="none"/></svg>
  <svg class="ul" style="left:225px;top:86.5px" width="13.5" height="13" viewBox="0 0 13.5 13"><path d="M.6 6.5 L9.8 .7 L12.4 1.3 L13 6.5 L12.4 11.7 L9.8 12.3 Z" fill="#fff" stroke="#0c0c0c" stroke-width="1.2" stroke-linejoin="round"/><path d="M3.6 6.5 H8.6 M8.6 6.5 L11 1.9 M8.6 6.5 L11 11.1" stroke="#111" stroke-width="1.3" fill="none"/></svg>
  <svg class="ul" style="left:225px;top:102.5px" width="13.5" height="13" viewBox="0 0 13.5 13"><path d="M.6 6.5 L9.8 .7 L12.4 1.3 L13 6.5 L12.4 11.7 L9.8 12.3 Z" fill="#fff" stroke="#0c0c0c" stroke-width="1.2" stroke-linejoin="round"/><path d="M3.6 6.5 H8.6 M8.6 6.5 L11 1.9 M8.6 6.5 L11 11.1" stroke="#111" stroke-width="1.3" fill="none"/></svg>
  <svg class="ul" style="left:225px;top:118.5px" width="13.5" height="13" viewBox="0 0 13.5 13"><path d="M.6 6.5 L9.8 .7 L12.4 1.3 L13 6.5 L12.4 11.7 L9.8 12.3 Z" fill="#fff" stroke="#0c0c0c" stroke-width="1.2" stroke-linejoin="round"/><path d="M3.6 6.5 H8.6 M8.6 6.5 L11 1.9 M8.6 6.5 L11 11.1" stroke="#111" stroke-width="1.3" fill="none"/></svg>
  <span class="t" style="left:242px;top:55px;letter-spacing:0.46px">I2Localization</span><span class="t" style="left:336px;top:55px;letter-spacing:0.58px">features Callbacks and Parameters</span>
  <span class="t" style="left:242px;top:71px;letter-spacing:0.46px">I2Localization</span><span class="t" style="left:336px;top:71px;letter-spacing:0.58px">features LocalizedString</span>
  <span class="t" style="left:242px;top:87px;letter-spacing:0.46px">I2Localization</span><span class="t" style="left:336px;top:87px;letter-spacing:0.58px">features Plurals</span>
  <span class="t" style="left:242px;top:103px;letter-spacing:0.46px">I2Localization</span><span class="t" style="left:336px;top:103px;letter-spacing:0.58px">features Realtime Translation</span>
  <span class="t" style="left:242px;top:119px;letter-spacing:0.46px">I2Localization</span><span class="t" style="left:336px;top:119px;letter-spacing:0.58px">features RightToLeft Text Rendering</span>
</div>

</div>
<div id="edge" style="position:absolute;left:1165px;top:0;width:3px;height:691px;background:#fff;border-left:1px solid #eaa4e2;">
  <div style="left:0;top:68px;width:2px;height:10px;background:#14142a"></div>
  <div style="left:0;top:133px;width:2px;height:10px;background:#6a1a12"></div>
  <div style="left:0;top:159px;width:1px;height:8px;background:#2a50c0"></div>
  <div style="left:0;top:196px;width:2px;height:9px;background:#1a2a8a"></div>
  <div style="left:0;top:219px;width:2px;height:12px;background:#e08a20"></div>
  <div style="left:0;top:242px;width:2px;height:10px;background:#b8641a"></div>
  <div style="left:0;top:357px;width:1px;height:10px;background:#3a60c8"></div>
  <div style="left:0;top:416px;width:2px;height:6px;background:#e09030"></div>
  <div style="left:0;top:437px;width:2px;height:11px;background:#222"></div>
  <div style="left:0;top:480px;width:2px;height:11px;background:#222"></div>
  <div style="left:0;top:500px;width:2px;height:7px;background:#d0601a"></div>
  <div style="left:0;top:565px;width:1px;height:13px;background:#6a8ad8"></div>
  <div style="left:0;top:623px;width:2px;height:3px;background:#333"></div>
  <div style="left:0;top:629px;width:2px;height:3px;background:#333"></div>
  <div style="left:0;top:634px;width:2px;height:2px;background:#333"></div>
  <div style="left:0;top:661px;width:1px;height:11px;background:#4a70d0"></div>
</div>

</body>
</html>
